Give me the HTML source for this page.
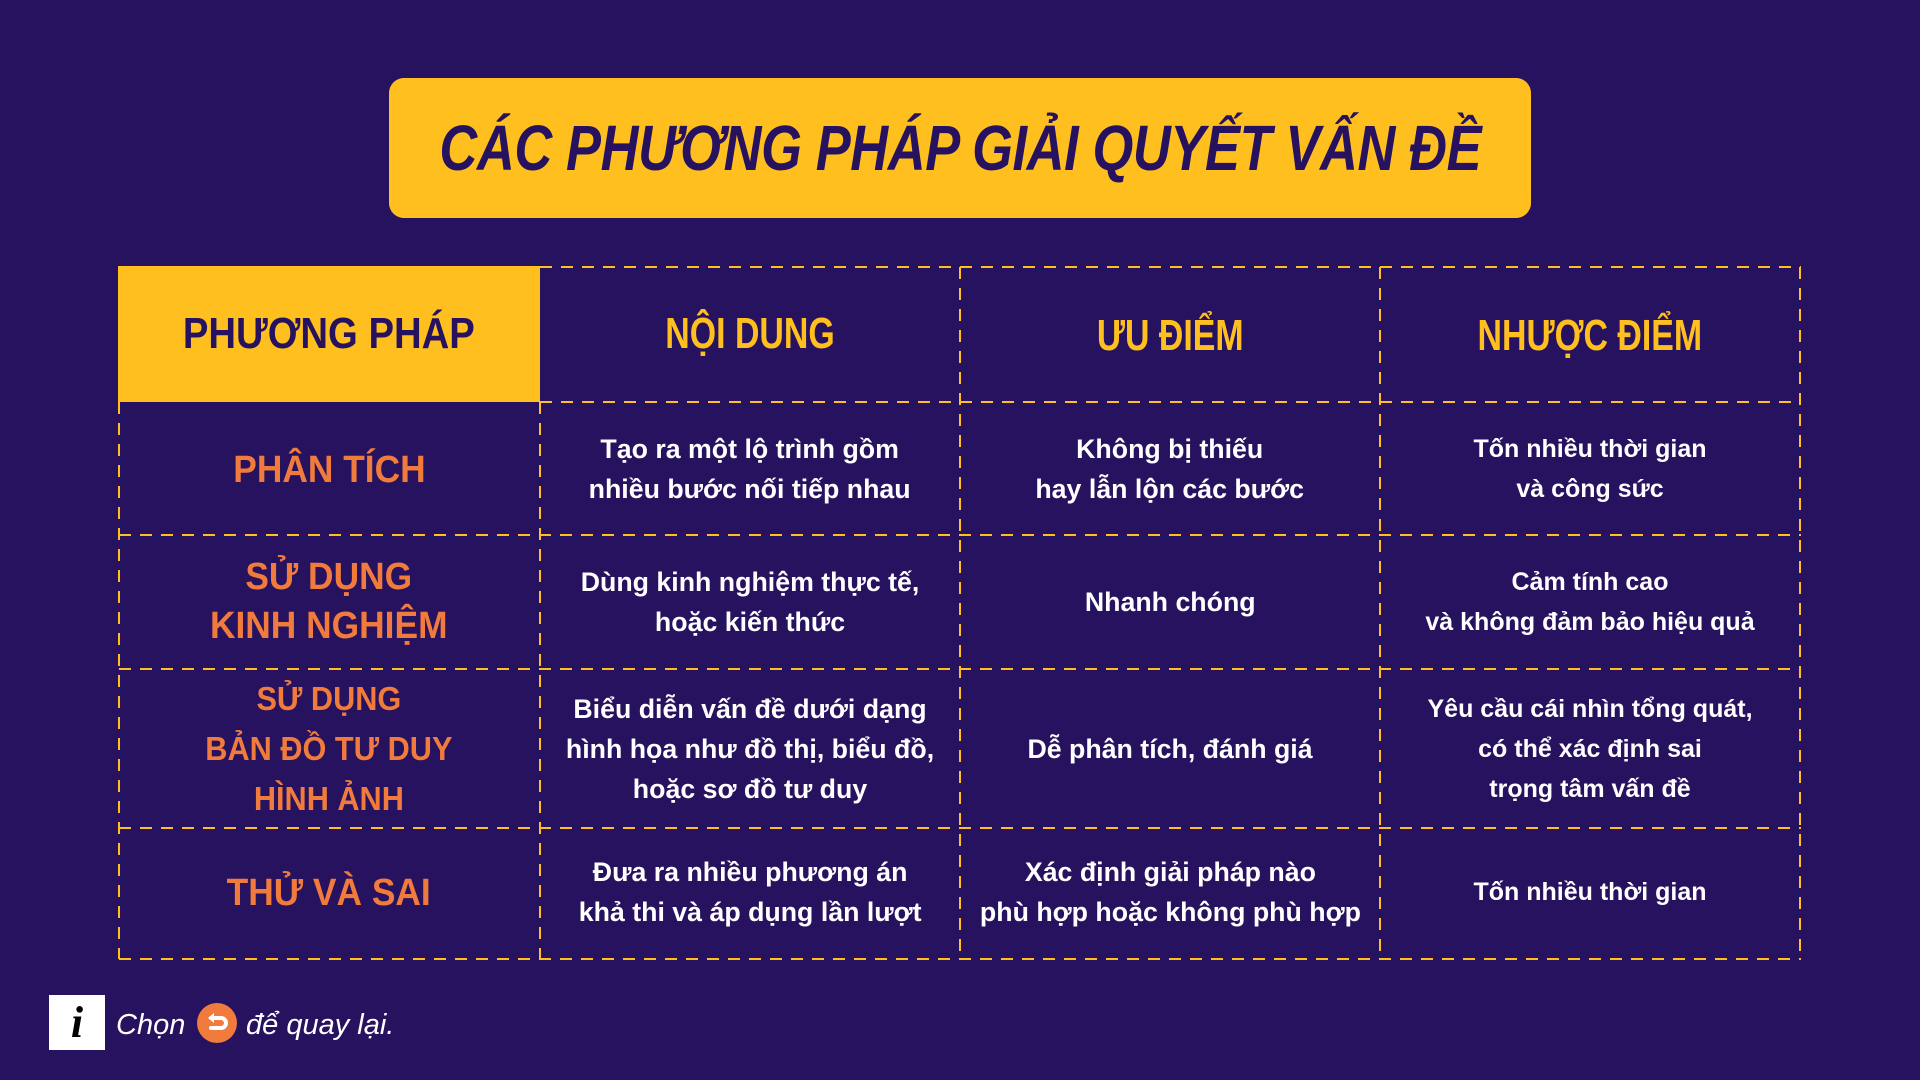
<!DOCTYPE html>
<html><head><meta charset="utf-8"><style>
*{margin:0;padding:0;box-sizing:border-box}
body{width:1920px;height:1080px;background:#26125e;position:relative;overflow:hidden;font-family:"Liberation Sans",sans-serif}
.title{position:absolute;left:389px;top:78px;width:1142px;height:140px;background:#ffc01f;border-radius:15px;display:flex;align-items:center;justify-content:center}
.title span{display:inline-block;font-weight:bold;font-style:italic;font-size:64px;color:#26125e;transform:scaleX(0.82);white-space:nowrap;letter-spacing:-0.5px}
.c{position:absolute;display:flex;align-items:center;justify-content:center;text-align:center;font-weight:bold}
.c span{display:inline-block;white-space:nowrap}
.h{font-size:44px;color:#ffc01f}
.h span{transform:scaleX(0.77)}
.m{color:#f07b3c;font-size:38px;line-height:49px}
.m span{transform:scaleX(0.93)}
.t{color:#fff;font-size:27px;line-height:40px}
.t span{transform:scaleX(0.99)}
.r{color:#fff;font-size:25px;line-height:40px}
.r span{transform:scaleX(1.0)}
</style></head><body>
<div class="title"><span>CÁC PHƯƠNG PHÁP GIẢI QUYẾT VẤN ĐỀ</span></div>
<div style="position:absolute;left:118px;top:266px;width:422px;height:136px;background:#ffc01f"></div>
<svg style="position:absolute;left:0;top:0" width="1920" height="1080">
<g stroke="#ffc01f" stroke-width="2" stroke-dasharray="12 9" fill="none">
<line x1="540" y1="267" x2="1801" y2="267"/>
<line x1="540" y1="402" x2="1801" y2="402"/>
<line x1="119" y1="535" x2="1801" y2="535"/>
<line x1="119" y1="669" x2="1801" y2="669"/>
<line x1="119" y1="828" x2="1801" y2="828"/>
<line x1="119" y1="959" x2="1801" y2="959"/>
<line x1="119" y1="402" x2="119" y2="959"/>
<line x1="540" y1="402" x2="540" y2="959"/>
<line x1="960" y1="267" x2="960" y2="959"/>
<line x1="1380" y1="267" x2="1380" y2="959"/>
<line x1="1800" y1="267" x2="1800" y2="959"/>
</g></svg>
<div class="c h" style="left:118px;top:266px;width:422px;height:136px;color:#26125e"><span style="transform:scaleX(0.87)">PHƯƠNG PHÁP</span></div>
<div class="c h" style="left:540px;top:266px;width:420px;height:136px"><span>NỘI DUNG</span></div>
<div class="c h" style="left:960px;top:266px;width:420px;height:140px"><span>ƯU ĐIỂM</span></div>
<div class="c h" style="left:1380px;top:266px;width:420px;height:140px"><span>NHƯỢC ĐIỂM</span></div>

<div class="c m" style="left:118px;top:404px;width:422px;height:133px"><span>PHÂN TÍCH</span></div>
<div class="c t" style="left:540px;top:402px;width:420px;height:133px"><span>Tạo ra một lộ trình gồm<br>nhiều bước nối tiếp nhau</span></div>
<div class="c t" style="left:960px;top:402px;width:420px;height:133px"><span>Không bị thiếu<br>hay lẫn lộn các bước</span></div>
<div class="c r" style="left:1380px;top:402px;width:420px;height:133px"><span>Tốn nhiều thời gian<br>và công sức</span></div>

<div class="c m" style="left:118px;top:535px;width:422px;height:134px"><span>SỬ DỤNG<br>KINH NGHIỆM</span></div>
<div class="c t" style="left:540px;top:535px;width:420px;height:134px"><span>Dùng kinh nghiệm thực tế,<br>hoặc kiến thức</span></div>
<div class="c t" style="left:960px;top:535px;width:420px;height:134px"><span>Nhanh chóng</span></div>
<div class="c r" style="left:1380px;top:535px;width:420px;height:134px"><span>Cảm tính cao<br>và không đảm bảo hiệu quả</span></div>

<div class="c m" style="left:118px;top:669px;width:422px;height:159px;font-size:33px;line-height:50px"><span>SỬ DỤNG<br>BẢN ĐỒ TƯ DUY<br>HÌNH ẢNH</span></div>
<div class="c t" style="left:540px;top:669px;width:420px;height:159px"><span>Biểu diễn vấn đề dưới dạng<br>hình họa như đồ thị, biểu đồ,<br>hoặc sơ đồ tư duy</span></div>
<div class="c t" style="left:960px;top:669px;width:420px;height:159px"><span>Dễ phân tích, đánh giá</span></div>
<div class="c r" style="left:1380px;top:669px;width:420px;height:159px"><span>Yêu cầu cái nhìn tổng quát,<br>có thể xác định sai<br>trọng tâm vấn đề</span></div>

<div class="c m" style="left:118px;top:828px;width:422px;height:131px"><span>THỬ VÀ SAI</span></div>
<div class="c t" style="left:540px;top:826px;width:420px;height:131px"><span>Đưa ra nhiều phương án<br>khả thi và áp dụng lần lượt</span></div>
<div class="c t" style="left:960px;top:826px;width:420px;height:131px"><span>Xác định giải pháp nào<br>phù hợp hoặc không phù hợp</span></div>
<div class="c r" style="left:1380px;top:826px;width:420px;height:131px"><span>Tốn nhiều thời gian</span></div>

<div style="position:absolute;left:49px;top:995px;width:56px;height:55px;background:#fff;display:flex;align-items:center;justify-content:center;font-family:'Liberation Serif',serif;font-style:italic;font-weight:bold;font-size:44px;color:#000">i</div>
<div style="position:absolute;left:116px;top:1009px;font-style:italic;font-size:29px;color:#fff;white-space:nowrap">Chọn</div>
<div style="position:absolute;left:197px;top:1003px;width:40px;height:40px;border-radius:50%;background:#f07b3c"></div>
<svg style="position:absolute;left:197px;top:1003px" width="40" height="40" viewBox="0 0 40 40"><path d="M14 15 H24 a5 5 0 0 1 0 10 H14" stroke="#fff" stroke-width="4" fill="none" stroke-linecap="round"/><path d="M11 15 L17 10 L17 20 Z" fill="#fff"/></svg>
<div style="position:absolute;left:246px;top:1009px;font-style:italic;font-size:29px;color:#fff;white-space:nowrap">để quay lại.</div>
</body></html>
